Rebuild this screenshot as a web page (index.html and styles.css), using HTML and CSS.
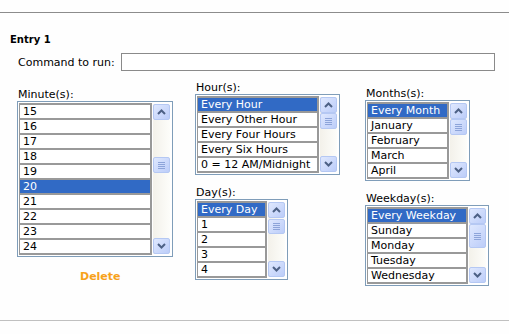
FILE: index.html
```html
<!DOCTYPE html>
<html>
<head>
<meta charset="utf-8">
<link rel="stylesheet" href="styles.css">
</head>
<body>
<div class="page">
  <div class="rule rule-top"></div>
  <div class="entry">Entry 1</div>
  <div class="cmd">
    <span class="cmd-label">Command to run:</span>
    <div class="cmd-input"></div>
  </div>
  <div class="grid">
    <div class="col col-1">
      <div class="lbl">Minute(s):</div>
      <div class="lb lb-minute">
        <div class="opts">
          <div class="opt">15</div><div class="opt">16</div><div class="opt">17</div><div class="opt">18</div><div class="opt">19</div>
          <div class="opt sel">20</div><div class="opt">21</div><div class="opt">22</div><div class="opt">23</div><div class="opt">24</div>
        </div>
        <div class="sb">
          <div class="btn"><svg width="9" height="6" viewBox="0 0 9 6"><path d="M1 5 L4.5 1.5 L8 5" fill="none" stroke="#4d6185" stroke-width="2"/></svg></div>
          <div class="track"><div class="thumb thumb-minute"><i></i><i></i><i></i><i></i></div></div>
          <div class="btn"><svg width="9" height="6" viewBox="0 0 9 6"><path d="M1 1 L4.5 4.5 L8 1" fill="none" stroke="#4d6185" stroke-width="2"/></svg></div>
        </div>
      </div>
      <div class="delete">Delete</div>
    </div>
    <div class="col col-2">
      <div class="lbl">Hour(s):</div>
      <div class="lb lb-hour">
        <div class="opts">
          <div class="opt sel">Every Hour</div><div class="opt">Every Other Hour</div><div class="opt">Every Four Hours</div><div class="opt">Every Six Hours</div><div class="opt">0 = 12 AM/Midnight</div>
        </div>
        <div class="sb">
          <div class="btn"><svg width="9" height="6" viewBox="0 0 9 6"><path d="M1 5 L4.5 1.5 L8 5" fill="none" stroke="#4d6185" stroke-width="2"/></svg></div>
          <div class="track"><div class="thumb"><i></i><i></i><i></i><i></i></div></div>
          <div class="btn"><svg width="9" height="6" viewBox="0 0 9 6"><path d="M1 1 L4.5 4.5 L8 1" fill="none" stroke="#4d6185" stroke-width="2"/></svg></div>
        </div>
      </div>
      <div class="lbl lbl-day">Day(s):</div>
      <div class="lb lb-day">
        <div class="opts">
          <div class="opt sel">Every Day</div><div class="opt">1</div><div class="opt">2</div><div class="opt">3</div><div class="opt">4</div>
        </div>
        <div class="sb">
          <div class="btn"><svg width="9" height="6" viewBox="0 0 9 6"><path d="M1 5 L4.5 1.5 L8 5" fill="none" stroke="#4d6185" stroke-width="2"/></svg></div>
          <div class="track"><div class="thumb thumb-day"><i></i><i></i><i></i><i></i></div></div>
          <div class="btn"><svg width="9" height="6" viewBox="0 0 9 6"><path d="M1 1 L4.5 4.5 L8 1" fill="none" stroke="#4d6185" stroke-width="2"/></svg></div>
        </div>
      </div>
    </div>
    <div class="col col-3">
      <div class="lbl">Months(s):</div>
      <div class="lb lb-month">
        <div class="opts">
          <div class="opt sel">Every Month</div><div class="opt">January</div><div class="opt">February</div><div class="opt">March</div><div class="opt">April</div>
        </div>
        <div class="sb">
          <div class="btn"><svg width="9" height="6" viewBox="0 0 9 6"><path d="M1 5 L4.5 1.5 L8 5" fill="none" stroke="#4d6185" stroke-width="2"/></svg></div>
          <div class="track"><div class="thumb"><i></i><i></i><i></i><i></i></div></div>
          <div class="btn"><svg width="9" height="6" viewBox="0 0 9 6"><path d="M1 1 L4.5 4.5 L8 1" fill="none" stroke="#4d6185" stroke-width="2"/></svg></div>
        </div>
      </div>
      <div class="lbl lbl-week">Weekday(s):</div>
      <div class="lb lb-week">
        <div class="opts">
          <div class="opt sel">Every Weekday</div><div class="opt">Sunday</div><div class="opt">Monday</div><div class="opt">Tuesday</div><div class="opt">Wednesday</div>
        </div>
        <div class="sb">
          <div class="btn"><svg width="9" height="6" viewBox="0 0 9 6"><path d="M1 5 L4.5 1.5 L8 5" fill="none" stroke="#4d6185" stroke-width="2"/></svg></div>
          <div class="track"><div class="thumb thumb-week"><i></i><i></i><i></i><i></i></div></div>
          <div class="btn"><svg width="9" height="6" viewBox="0 0 9 6"><path d="M1 1 L4.5 4.5 L8 1" fill="none" stroke="#4d6185" stroke-width="2"/></svg></div>
        </div>
      </div>
    </div>
  </div>
  <div class="rule rule-bottom"></div>
</div>
</body>
</html>
```

FILE: styles.css
```css
html, body {
  margin: 0;
  padding: 0;
  background: #fefefe;
}
body {
  font-family: "DejaVu Sans", Verdana, sans-serif;
  color: #000;
  width: 509px;
  height: 334px;
  overflow: hidden;
}
.page {
  padding-top: 12px;
}
.rule {
  height: 1px;
  width: 509px;
}
.rule-top {
  background: #8c8c8c;
}
.rule-bottom {
  background: #c0c0c0;
  margin-top: 34px;
}
.entry {
  margin-top: 20px;
  margin-left: 10px;
  font-weight: bold;
  font-size: 10px;
  line-height: 13px;
  height: 13px;
}
.cmd {
  display: flex;
  align-items: center;
  margin-top: 7px;
  padding-left: 18px;
  height: 18px;
}
.cmd-label {
  font-size: 11px;
  width: 103px;
  white-space: nowrap;
}
.cmd-input {
  width: 372px;
  height: 16px;
  border: 1px solid #8a8a8a;
  background: #fff;
}
.grid {
  display: grid;
  grid-template-columns: 178px 170px auto;
  padding-left: 17px;
  margin-top: 10px;
  align-items: start;
}
.col-1 { padding-top: 7px; }
.col-2 { padding-top: 0; }
.col-3 { padding-top: 6px; }
.lbl {
  font-size: 11px;
  line-height: 13px;
  height: 13px;
  padding-left: 1px;
  white-space: nowrap;
}
.lbl-day { margin-top: 11px; }
.lbl-week { margin-top: 11px; }

.lb {
  display: flex;
  border: 1px solid #7f9db9;
  background: #fff;
  padding: 1px 2px 1px 1px;
  gap: 1px;
}
.lb-minute { width: 151px; }
.lb-hour { width: 140px; }
.lb-day { width: 88px; }
.lb-month { width: 100px; }
.lb-week { width: 119px; }

.opts {
  flex: 1;
  min-width: 0;
  background: #999;
  padding: 0 2px 2px 1px;
}
.opt {
  margin-top: 2px;
  height: 13px;
  line-height: 13px;
  background: #fff;
  font-size: 11px;
  padding-left: 3px;
  white-space: nowrap;
  overflow: hidden;
}
.opt.sel {
  background: #316ac5;
  color: #fff;
}

.sb {
  width: 17px;
  display: flex;
  flex-direction: column;
  background: linear-gradient(to right, #f3f1ea, #fdfdfa);
  margin: 1px 0;
}
.btn, .thumb {
  box-sizing: border-box;
  border: 1px solid #b5c8f3;
  border-radius: 2px;
  background: linear-gradient(135deg, #dfe8fe, #bccdf9);
  display: flex;
  align-items: center;
  justify-content: center;
}
.btn {
  height: 16px;
  flex: none;
}
.track {
  flex: 1;
  display: flex;
  flex-direction: column;
}
.thumb {
  height: 16px;
  flex-direction: column;
  gap: 1px;
}
.thumb i {
  display: block;
  width: 7px;
  height: 1px;
  background: #8da4d9;
}
.thumb-minute { margin-top: 37px; }
.thumb-day { margin-top: 1px; height: 15px; }
.thumb-week { height: 24px; }

.delete {
  margin-top: 13px;
  margin-left: 63px;
  color: #f7a21b;
  font-weight: bold;
  font-family: "DejaVu Sans", Verdana, sans-serif;
  font-size: 11px;
  line-height: 14px;
}
```
